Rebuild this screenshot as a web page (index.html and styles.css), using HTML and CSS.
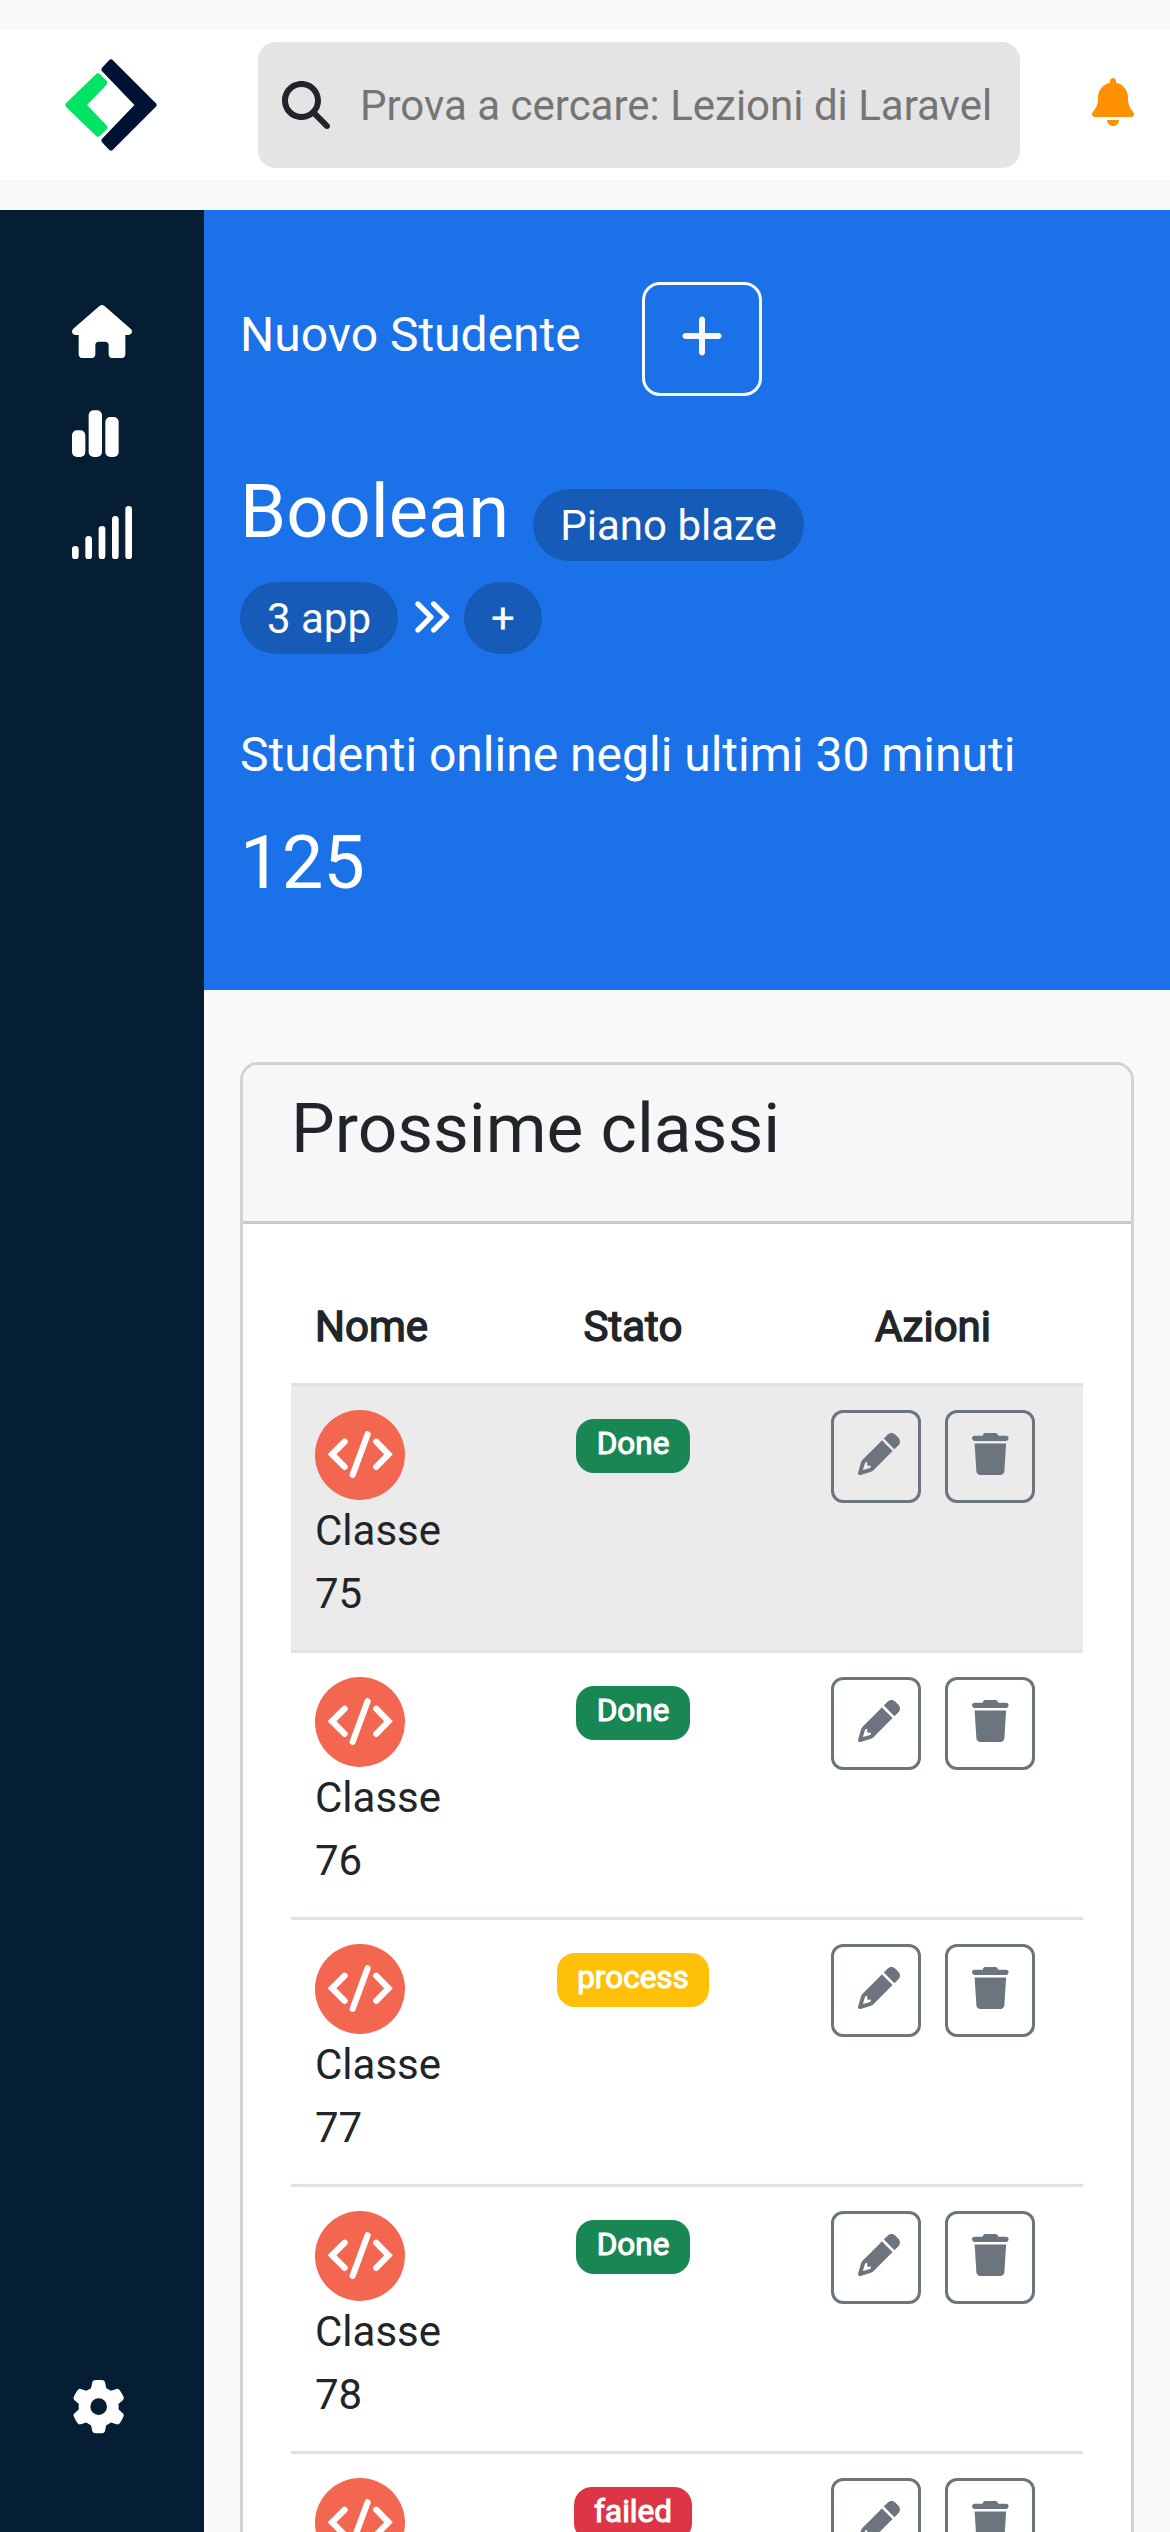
FILE: index.html
```html
<!DOCTYPE html>
<html lang="it">
<head>
<meta charset="utf-8">
<title>Dashboard</title>
<link rel="stylesheet" href="styles.css">
</head>
<body>
<svg class="sprite" aria-hidden="true">
  <symbol id="code" viewBox="0 0 90 90">
    <circle cx="45" cy="45" r="45" fill="#f36650"/>
    <g fill="none" stroke="#fff" stroke-width="6.2" stroke-linecap="round">
      <path d="M29.6 31.7 17 44.3 29.6 56.9M61.2 31.7 73.5 44.3 61.2 56.9M52.6 24.3 37.7 64.8"/>
    </g>
  </symbol>
  <symbol id="pencil" viewBox="0 0 512 512"><path d="M410.3 231l11.3-11.3-33.9-33.9-62.1-62.1L291.7 89.8l-11.3 11.3-22.6 22.6L58.6 322.9c-10.4 10.4-18 23.3-22.2 37.4L1 480.7c-2.5 8.4-.2 17.5 6.1 23.7s15.3 8.5 23.7 6.1l120.3-35.4c14.1-4.2 27-11.8 37.4-22.2L387.7 253.7 410.3 231zM160 399.4l-9.1 22.7c-4 3.1-8.5 5.4-13.3 6.9L59.4 452l23-78.1c1.4-4.9 3.8-9.4 6.9-13.3l22.7-9.1v32c0 8.8 7.2 16 16 16h32zM362.7 18.7L348.3 33.2 325.7 55.8 314.3 67.1l33.9 33.9 62.1 62.1 33.9 33.9 11.3-11.3 22.6-22.6 14.5-14.5c25-25 25-65.5 0-90.5L453.3 18.7c-25-25-65.5-25-90.5 0z"/></symbol>
  <symbol id="trash" viewBox="0 0 448 512"><path d="M135.2 17.7L128 32H32C14.3 32 0 46.3 0 64S14.3 96 32 96H416c17.7 0 32-14.3 32-32s-14.3-32-32-32H320l-7.2-14.3C307.4 6.8 296.3 0 284.2 0H163.8c-12.1 0-23.2 6.8-28.6 17.7zM416 128H32L53.2 467c1.6 25.3 22.6 45 47.9 45H346.9c25.3 0 46.3-19.7 47.9-45L416 128z"/></symbol>
</svg>

<header class="topbar">
  <svg class="logo" viewBox="0 0 92 92">
    <path class="logo-dark" d="M46 3.5 39.5 10.5 73.5 46 39.5 81.5 46 88.5 88.5 46z"/>
    <path class="logo-green" d="M33 17.5 39.3 23.6 18 46 39.3 68.4 33 74.5 3.5 46z"/>
  </svg>
  <div class="search">
    <svg class="search-icon" viewBox="0 0 512 512"><path d="M416 208c0 45.9-14.9 88.3-40 122.7L502.6 457.4c12.5 12.5 12.5 32.8 0 45.3s-32.8 12.5-45.3 0L330.7 376c-34.4 25.2-76.8 40-122.7 40C93.1 416 0 322.9 0 208S93.1 0 208 0S416 93.1 416 208zM208 352a144 144 0 1 0 0-288 144 144 0 1 0 0 288z"/></svg>
    <input class="search-input" type="text" placeholder="Prova a cercare: Lezioni di Laravel">
  </div>
  <svg class="bell" viewBox="0 0 448 512"><path d="M256 32V51.2C329 66 384 130.600 384 208V226.800C384 273.900 401.300 319.200 432.500 354.400L439.900 362.700C448.300 372.200 450.400 385.600 445.200 397.100C440 408.600 428.600 416 416 416H32C19.400 416 8 408.600 2.800 397.100C-2.400 385.600-.3 372.200 8.100 362.700L15.500 354.400C46.700 319.200 64 273.900 64 226.800V208C64 130.600 119 66 192 51.200V32C192 14.300 206.300 0 224 0C241.700 0 256 14.300 256 32zM224 512C207 512 190.700 505.300 178.700 493.300C166.700 481.300 160 465 160 448H288C288 465 281.300 481.300 269.300 493.300C257.300 505.300 241 512 224 512z"/></svg>
</header>

<div class="layout">
  <nav class="sidebar">
    <svg class="nav-home" viewBox="0 0 576 512"><path d="M575.8 255.5c0 18-15 32.1-32 32.1h-32l.7 160.2c0 2.7-.2 5.4-.5 8.1V472c0 22.1-17.9 40-40 40H456c-1.1 0-2.2 0-3.3-.1c-1.4 .1-2.8 .1-4.2 .1H416 392c-22.1 0-40-17.9-40-40V448 384c0-17.7-14.3-32-32-32H256c-17.7 0-32 14.3-32 32v64 24c0 22.1-17.9 40-40 40H160 128.1c-1.5 0-3-.1-4.5-.2c-1.2 .1-2.4 .2-3.6 .2H104c-22.1 0-40-17.9-40-40V360c0-.9 0-1.9 .1-2.8V287.6H32c-18 0-32-14-32-32.1c0-9 3-17 10-24L266.4 8c7-7 15-8 22-8s15 2 21 7L564.8 231.500c8 7 12 15 11 24z"/></svg>
    <svg class="nav-chart" viewBox="0 0 448 512"><rect x="0" y="224" width="128" height="256" rx="48"/><rect x="160" y="32" width="128" height="448" rx="48"/><rect x="320" y="96" width="128" height="384" rx="48"/></svg>
    <svg class="nav-signal" viewBox="0 0 576 512"><rect x="0" y="384" width="64" height="128" rx="32"/><rect x="128" y="288" width="64" height="224" rx="32"/><rect x="256" y="192" width="64" height="320" rx="32"/><rect x="384" y="96" width="64" height="416" rx="32"/><rect x="512" y="0" width="64" height="512" rx="32"/></svg>
    <svg class="nav-gear" viewBox="0 0 512 512"><path d="M495.9 166.6c3.2 8.7 .5 18.4-6.4 24.6l-43.3 39.4c1.1 8.3 1.7 16.8 1.7 25.4s-.6 17.1-1.7 25.4l43.3 39.4c6.9 6.2 9.6 15.9 6.4 24.6c-4.4 11.9-9.7 23.3-15.8 34.3l-4.7 8.1c-6.6 11-14 21.4-22.1 31.2c-5.9 7.2-15.7 9.6-24.5 6.8l-55.7-17.7c-13.4 10.3-28.2 18.9-44 25.4l-12.5 57.1c-2 9.1-9 16.3-18.2 17.8c-13.8 2.3-28 3.5-42.5 3.5s-28.7-1.2-42.5-3.5c-9.2-1.500-16.2-8.700-18.2-17.800l-12.5-57.100c-15.800-6.500-30.600-15.100-44-25.400L83.100 425.900c-8.800 2.800-18.600 .300-24.500-6.800c-8.100-9.800-15.500-20.200-22.100-31.200l-4.700-8.100c-6.100-11-11.400-22.400-15.800-34.300c-3.200-8.700-.5-18.400 6.400-24.600l43.300-39.400C64.600 273.100 64 264.600 64 256s.6-17.100 1.700-25.400L22.400 191.200c-6.900-6.200-9.600-15.900-6.400-24.600c4.400-11.900 9.700-23.300 15.800-34.300l4.700-8.100c6.600-11 14-21.400 22.100-31.200c5.900-7.200 15.700-9.600 24.500-6.800l55.700 17.700c13.400-10.300 28.200-18.900 44-25.400l12.500-57.100c2-9.100 9-16.300 18.200-17.800C227.300 1.200 241.500 0 256 0s28.700 1.200 42.500 3.500c9.200 1.500 16.200 8.700 18.200 17.800l12.500 57.100c15.800 6.500 30.600 15.100 44 25.400l55.700-17.700c8.800-2.800 18.600-.3 24.500 6.800c8.100 9.800 15.500 20.200 22.100 31.200l4.700 8.100c6.100 11 11.400 22.400 15.800 34.300zM256 336a80 80 0 1 0 0-160 80 80 0 1 0 0 160z"/></svg>
  </nav>

  <main class="main">
    <section class="hero">
      <div class="new-student">
        <span class="lead">Nuovo Studente</span>
        <button class="add" type="button" aria-label="Aggiungi">
          <svg class="add-icon" viewBox="0 0 448 512"><path d="M256 80c0-17.700-14.300-32-32-32s-32 14.300-32 32V224H48c-17.700 0-32 14.300-32 32s14.300 32 32 32H192V432c0 17.700 14.300 32 32 32s32-14.300 32-32V288H400c17.700 0 32-14.300 32-32s-14.300-32-32-32H256V80z"/></svg>
        </button>
      </div>
      <div class="org">
        <h2 class="figure">Boolean</h2>
        <span class="pill">Piano blaze</span>
      </div>
      <div class="apps">
        <span class="pill">3 app</span>
        <svg class="angles" viewBox="0 0 512 512"><path d="M470.6 278.600c12.500-12.500 12.500-32.800 0-45.300l-160-160c-12.500-12.500-32.800-12.500-45.300 0s-12.500 32.800 0 45.300L402.700 256 265.400 393.400c-12.500 12.500-12.500 32.800 0 45.300s32.800 12.500 45.300 0l160-160zm-352 160l160-160c12.500-12.500 12.500-32.800 0-45.300l-160-160c-12.500-12.500-32.800-12.500-45.300 0s-12.500 32.800 0 45.300L210.700 256 73.400 393.400c-12.500 12.500-12.500 32.800 0 45.300s32.800 12.500 45.300 0z"/></svg>
        <span class="pill">+</span>
      </div>
      <p class="online">Studenti online negli ultimi 30 minuti</p>
      <h2 class="figure count">125</h2>
    </section>

    <section class="card">
      <h3 class="card-title">Prossime classi</h3>
      <div class="card-body">
        <table class="classes">
          <thead>
            <tr><th class="col-name">Nome</th><th class="col-wide">Stato</th><th class="col-wide">Azioni</th></tr>
          </thead>
          <tbody>
            <tr class="active">
              <td><svg class="avatar"><use href="#code"/></svg><div class="name">Classe<br>75</div></td>
              <td><span class="badge done">Done</span></td>
              <td><div class="actions"><button class="act"><svg class="pencil"><use href="#pencil"/></svg></button><button class="act"><svg class="trash"><use href="#trash"/></svg></button></div></td>
            </tr>
            <tr>
              <td><svg class="avatar"><use href="#code"/></svg><div class="name">Classe<br>76</div></td>
              <td><span class="badge done">Done</span></td>
              <td><div class="actions"><button class="act"><svg class="pencil"><use href="#pencil"/></svg></button><button class="act"><svg class="trash"><use href="#trash"/></svg></button></div></td>
            </tr>
            <tr>
              <td><svg class="avatar"><use href="#code"/></svg><div class="name">Classe<br>77</div></td>
              <td><span class="badge process">process</span></td>
              <td><div class="actions"><button class="act"><svg class="pencil"><use href="#pencil"/></svg></button><button class="act"><svg class="trash"><use href="#trash"/></svg></button></div></td>
            </tr>
            <tr>
              <td><svg class="avatar"><use href="#code"/></svg><div class="name">Classe<br>78</div></td>
              <td><span class="badge done">Done</span></td>
              <td><div class="actions"><button class="act"><svg class="pencil"><use href="#pencil"/></svg></button><button class="act"><svg class="trash"><use href="#trash"/></svg></button></div></td>
            </tr>
            <tr>
              <td><svg class="avatar"><use href="#code"/></svg></td>
              <td><span class="badge failed">failed</span></td>
              <td><div class="actions"><button class="act"><svg class="pencil"><use href="#pencil"/></svg></button><button class="act"><svg class="trash"><use href="#trash"/></svg></button></div></td>
            </tr>
          </tbody>
        </table>
      </div>
    </section>
  </main>
</div>
</body>
</html>
```

FILE: styles.css
```css
* { box-sizing: border-box; }

body {
  margin: 0;
  height: 2532px;
  overflow: hidden;
  display: flex;
  flex-direction: column;
  background: #f8f9fb;
  color: #212529;
  font: 42px/63px Roboto, "Liberation Sans", sans-serif;
}

svg { display: block; flex: none; fill: currentColor; }
.sprite { width: 0; height: 0; position: absolute; }
h2, h3, p { margin: 0; font-weight: 400; }
button { margin: 0; background: none; font: inherit; }

/* Top bar */
.topbar {
  flex: none;
  display: flex;
  align-items: center;
  height: 150px;
  margin: 30px 0;
  padding: 0 36px 0 65px;
  background: #fff;
}
.logo { width: 92px; height: 92px; margin-right: 101px; }
.logo-dark, .logo-green { stroke-width: 6px; stroke-linejoin: round; }
.logo-dark { fill: #001233; stroke: #001233; }
.logo-green { fill: #00e364; stroke: #00e364; }
.search {
  display: flex;
  align-items: center;
  width: 762px;
  height: 126px;
  padding: 0 24px;
  border-radius: 18px;
  background: #e4e4e4;
}
.search-icon { width: 48px; height: 48px; margin-right: 30px; }
.search-input {
  flex: 1;
  min-width: 0;
  padding: 0;
  border: 0;
  background: none;
  font: inherit;
}
.search-input::placeholder { color: #757575; opacity: 1; }
.bell { width: 42px; height: 48px; margin: -6px 0 0 auto; color: #ff9000; }

/* Page frame */
.layout { flex: 1; display: flex; min-height: 0; }
.sidebar {
  flex: none;
  display: flex;
  flex-direction: column;
  width: 204px;
  padding: 94.5px 72px 98.3px;
  background: #051e34;
  color: #fff;
}
.nav-home, .nav-signal { width: 60px; height: 53.33px; }
.nav-chart { width: 46.67px; height: 53.33px; margin: 49px 0 46px; }
.nav-gear { width: 53.33px; height: 53.33px; margin-top: auto; }
.main { flex: 1; min-width: 0; }

/* Hero */
.hero { height: 780px; padding: 72px 36px; background: #1b71e8; color: #fff; }
.new-student { display: flex; align-items: flex-start; height: 114px; }
.lead { width: 402px; padding-top: 17px; font-size: 48px; line-height: 72px; }
.add {
  display: flex;
  justify-content: center;
  width: 120px;
  height: 114px;
  padding: 27px 0 0;
  border: 3px solid #f8f9fa;
  border-radius: 18px;
  color: #f8f9fa;
}
.add-icon { width: 42px; height: 48px; }
.figure { font-size: 74.13px; line-height: 89px; }
.org { display: flex; align-items: flex-start; gap: 24px; margin-top: 71px; height: 94px; }
.org .pill { margin-top: 22px; }
.apps { display: flex; align-items: center; gap: 12px; margin-top: 21px; }
.pill {
  height: 72px;
  padding: 5px 27px 0;
  border-radius: 36px;
  background: #175bb9;
  line-height: 63px;
}
.angles { width: 42px; height: 42px; margin-top: -2px; }
.online { margin-top: 65px; font-size: 48px; line-height: 72px; }
.count { margin-top: 27px; }

/* Card */
.card {
  margin: 72px 36px 0;
  border: 3px solid #d1d2d4;
  border-radius: 18px;
  background: #fff;
  overflow: hidden;
}
.card-title {
  height: 159px;
  padding: 22px 48px 0;
  border-bottom: 3px solid #cacaca;
  background: #f7f7f7;
  font-size: 69.42px;
  line-height: 83px;
}
.card-body { padding: 48px; }
.classes { width: 792px; border-collapse: collapse; border-spacing: 0; table-layout: fixed; text-align: center; }
.classes tr { border-bottom: 3px solid #dee2e6; }
.classes th, .classes td { padding: 24px; vertical-align: top; }
.classes th { padding: 23px 24px 25px; font-weight: 400; -webkit-text-stroke: 1.4px currentColor; }
.classes th:first-child, .classes td:first-child { text-align: left; }
.col-name { width: 192px; }
.col-wide { width: 300px; }
.active { background: #ebebeb; }
.avatar { width: 90px; height: 90px; }
.name { margin: -1px 0 1px; }
.badge {
  display: block;
  width: fit-content;
  height: 54px;
  margin: 9px auto 0;
  padding: 9px 20.5px 0;
  border-radius: 18px;
  color: #fff;
  font-size: 31.5px;
  line-height: 31.5px;
  -webkit-text-stroke: 1.1px currentColor;
}
.done { background: #198754; }
.process { background: #ffc107; }
.failed { background: #dc3545; }
.actions { display: flex; justify-content: center; gap: 24px; }
.act {
  display: flex;
  width: 90px;
  height: 93px;
  padding: 20px 24px;
  border: 3px solid #6c757d;
  border-radius: 12px;
  color: #6c757d;
}
.pencil { width: 42px; height: 42px; }
.trash { width: 36.75px; height: 42px; }
```
